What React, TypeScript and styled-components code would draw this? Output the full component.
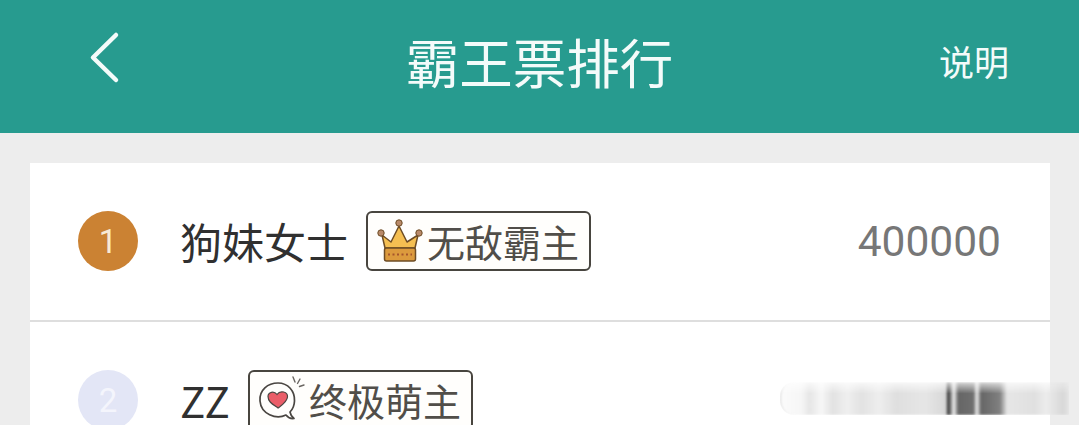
import * as React from 'react';
import styled, { createGlobalStyle } from 'styled-components';

const CJK = '"Noto Sans CJK SC", "Noto Sans", sans-serif';

const GlobalStyle = createGlobalStyle`
  html, body {
    background: #ededed;
    height: 100%;
    margin: 0;
    overflow: hidden;
  }
`;

const Page = styled.div`
  background: #ededed;
  font-family: ${CJK};
  height: 425px;
  overflow: hidden;
  position: relative;
  width: 1079px;
`;

const Header = styled.header`
  align-items: center;
  background: #279b8f;
  color: #f4fbfa;
  display: grid;
  grid-template-columns: 1fr auto 1fr;
  height: 133px;
  padding: 0 70px;
`;

const BackButton = styled.div`
  display: flex;
  height: 56px;
  margin: 0 0 18px 18px;
  width: 36px;
`;

const Title = styled.h1`
  font-size: 53.5px;
  font-weight: 400;
  line-height: 1;
  margin: 0 0 12px;
`;

const HelpLink = styled.span`
  font-size: 35px;
  justify-self: end;
  line-height: 1;
  margin-bottom: 12px;
`;

const List = styled.section`
  background: #fff;
  margin: 30px 29px 0 30px;
`;

const Row = styled.div`
  align-items: center;
  border-bottom: 2px solid #dedede;
  box-sizing: border-box;
  display: flex;
  height: 159px;
  padding: 0 49px 1px 48px;
`;

const Rank = styled.div<{ $color: string; $text: string }>`
  align-items: center;
  background: ${({ $color }) => $color};
  border-radius: 50%;
  color: ${({ $text }) => $text};
  display: flex;
  flex: none;
  font-family: Roboto, sans-serif;
  font-size: 33px;
  height: 60px;
  justify-content: center;
  margin-right: 42px;
  width: 60px;
`;

const Name = styled.span`
  color: #303030;
  font-size: 42px;
  font-weight: 400;
  line-height: 1;
  margin-right: 18px;
`;

const Badge = styled.div`
  align-items: center;
  background: #fffefc;
  border: 2px solid #48453f;
  border-radius: 6px;
  box-sizing: border-box;
  color: #514e49;
  display: flex;
  font-size: 38px;
  font-weight: 400;
  gap: 3px;
  height: 60px;
  line-height: 1;
  padding: 0 8px;
  width: 225px;
`;

const Score = styled.span`
  color: #777;
  font-family: Roboto, sans-serif;
  font-size: 42.5px;
  margin-left: auto;
`;

// blurred-out watermark in the lower right corner
const Watermark = styled.div`
  background: linear-gradient(
    90deg,
    #fbfbfb 0,
    #f6f6f6 7%,
    #e6e6e6 10%,
    #f7f7f7 14%,
    #e2e2e2 18%,
    #efefef 23%,
    #e2e2e2 28%,
    #eeeeee 34%,
    #dfdfdf 40%,
    #e6e6e6 50%,
    #dadada 56%,
    #d2d2d2 57.3%,
    #4e4e4e 57.8%,
    #4e4e4e 58.4%,
    #f0f0f0 60%,
    #666 61.6%,
    #6f6f6f 66.8%,
    #ececec 68%,
    #666 69.5%,
    #808080 76%,
    #e6e6e6 78.5%,
    #e0e0e0 88%,
    #ececec 92%,
    #d8d8d8 98%,
    #e4e4e4 100%
  );
  border-left: 1px solid #cfcfcf;
  border-radius: 14px 0 0 14px;
  filter: blur(1px);
  height: 33px;
  left: 780px;
  mask-image: linear-gradient(180deg, rgba(0, 0, 0, 0.25) 0, #000 35%, #000 100%);
  position: absolute;
  top: 382px;
  width: 288px;
`;

const Crown = () => (
  <svg width="48" height="46" viewBox="0 0 48 46">
    <path
      d="M9 30 L6 17 L15 24 L23 8 L31 24 L42 17 L39 30 Z"
      fill="#f5bf52"
      stroke="#6d4c25"
      strokeWidth="1.5"
      strokeLinejoin="round"
    />
    <rect x="8.5" y="30" width="31" height="13" rx="2" fill="#dc9a3d" stroke="#6d4c25" strokeWidth="1.5" />
    <path d="M12 36.5 H36" stroke="#a5552c" strokeWidth="2" strokeDasharray="2 2.5" />
    <circle cx="5" cy="15" r="3.2" fill="#b98a6a" stroke="#6d4c25" />
    <circle cx="23" cy="5" r="3.2" fill="#b98a6a" stroke="#6d4c25" />
    <circle cx="43" cy="15" r="3.2" fill="#b98a6a" stroke="#6d4c25" />
  </svg>
);

const HeartBubble = () => (
  <svg width="48" height="48" viewBox="0 0 48 48" fill="none">
    <path
      d="M28 39 C18 44 3 38 2 25 C1 14 10 7 20 7 C30 7 37 15 36.5 25 C36.3 30 34.5 33.5 32 36 C32.5 39 34 41 36 42.5 C33 43 30 41.5 28 39 Z"
      stroke="#4a4642"
      strokeWidth="1.7"
      strokeLinejoin="round"
    />
    <path
      d="M20 32 C15 28.5 10 26 10 20.5 C10 16 16 14.5 19 18.5 C22 14 30 15.5 29.5 21 C29 26 24 29 20 32 Z"
      fill="#ea5d68"
      stroke="#4a4642"
      strokeWidth="1.2"
    />
    <path d="M35 1 L37 6 M42 3 L39.5 7.5 M46 9 L41.5 10.5" stroke="#6a6662" strokeWidth="1.4" strokeLinecap="round" />
  </svg>
);

const rows = [
  { rank: 1, color: '#cb8233', text: '#f8ead6', name: '狗妹女士', badge: '无敌霸主', icon: <Crown />, score: '400000' },
  { rank: 2, color: '#e3e6f6', text: '#f4f5fc', name: 'ZZ', badge: '终极萌主', icon: <HeartBubble />, score: '' },
];

export default function App() {
  return (
    <Page>
      <GlobalStyle />
      <Header>
        <BackButton>
          <svg width="36" height="56" viewBox="0 0 36 56" fill="none">
            <path d="M28 5 L5 27.5 L28 50" stroke="#f4fbfa" strokeWidth="4.5" strokeLinecap="round" strokeLinejoin="round" />
          </svg>
        </BackButton>
        <Title>霸王票排行</Title>
        <HelpLink>说明</HelpLink>
      </Header>
      <List>
        {rows.map((row) => (
          <Row key={row.rank}>
            <Rank $color={row.color} $text={row.text}>{row.rank}</Rank>
            <Name>{row.name}</Name>
            <Badge>
              {row.icon}
              <span>{row.badge}</span>
            </Badge>
            <Score>{row.score}</Score>
          </Row>
        ))}
      </List>
      <Watermark />
    </Page>
  );
}
